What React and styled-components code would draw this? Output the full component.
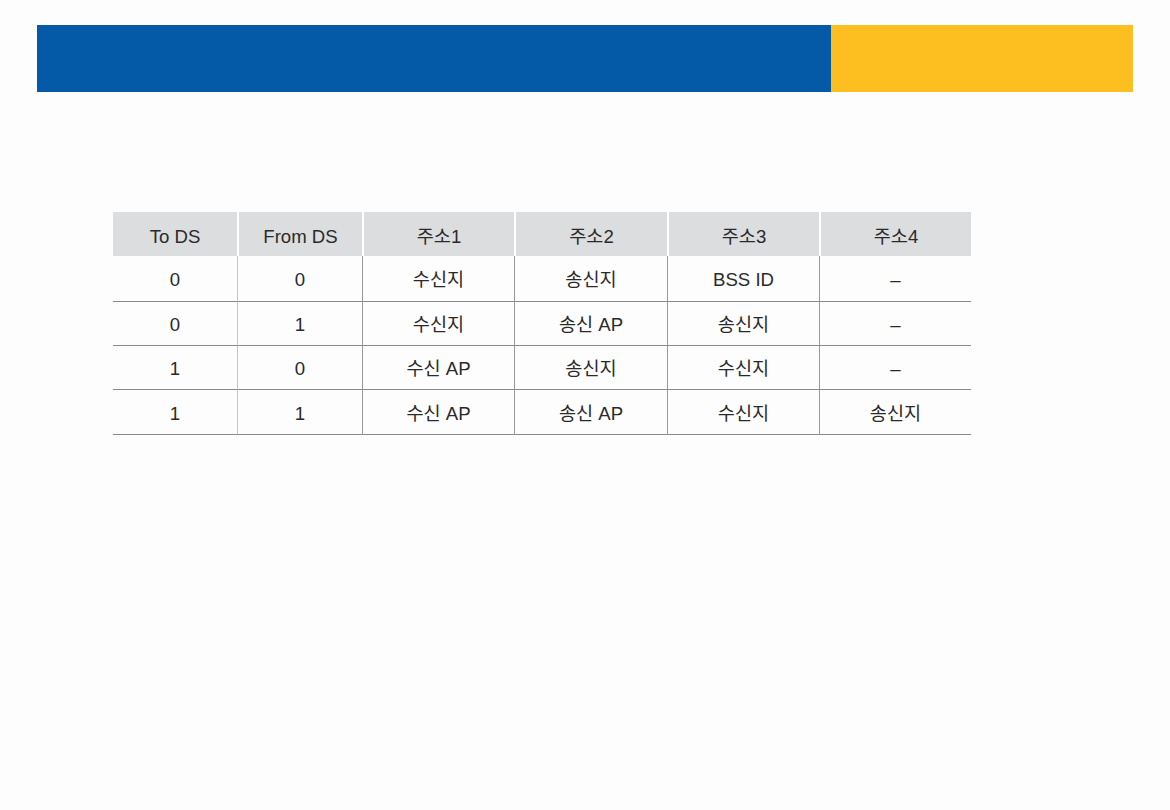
import React from "react";
import styled, { createGlobalStyle } from "styled-components";

const Global = createGlobalStyle`
  html, body { margin: 0; padding: 0; background: #fdfdfd; }
  body { font-family: "Liberation Sans", "Noto Sans CJK KR", sans-serif; }
`;

const Page = styled.div`
  width: 1170px;
  height: 810px;
  padding-top: 25px;
  box-sizing: border-box;
`;

const Banner = styled.div`
  margin-left: 37px;
  width: 1096px;
  height: 67px;
  display: flex;
`;

const BannerPart = styled.div`
  height: 100%;
  background: ${(p) => p.$color};
  width: ${(p) => p.$w}px;
`;

const Grid = styled.div`
  margin: 120px 0 0 113px;
  width: 858px;
  display: grid;
  grid-template-columns: 124px 125px 152px 153px 152px 152px;
  grid-template-rows: 44px 46px 44px 44px 45px;
  color: #2a2a2a;
  font-size: 18.6px;
  line-height: 22px;
`;

const Label = styled.span`
  display: block;
  height: 22px;
  line-height: 22px;
`;

const Head = styled.div`
  background: #dcdddf;
  display: flex;
  align-items: center;
  justify-content: center;
  border-left: ${(p) => (p.$first ? "none" : "2px solid #fff")};
  box-sizing: border-box;
  padding-top: 5px;
`;

const Cell = styled.div`
  display: flex;
  align-items: center;
  justify-content: center;
  border-bottom: 1px solid #8a8a8a;
  border-left: ${(p) => (p.$first ? "none" : `1px solid ${p.$light ? "#c4c4c4" : "#9a9a9a"}`)};
  box-sizing: border-box;
  padding-top: 3px;
`;

const headers = ["To DS", "From DS", "주소1", "주소2", "주소3", "주소4"];
const rows = [
  ["0", "0", "수신지", "송신지", "BSS ID", "–"],
  ["0", "1", "수신지", "송신 AP", "송신지", "–"],
  ["1", "0", "수신 AP", "송신지", "수신지", "–"],
  ["1", "1", "수신 AP", "송신 AP", "수신지", "송신지"],
];

export default function App() {
  return (
    <Page>
      <Global />
      <Banner>
        <BannerPart $color="#045aa6" $w={794} />
        <BannerPart $color="#fdbf20" $w={302} />
      </Banner>
      <Grid>
        {headers.map((h, i) => (
          <Head key={h} $first={i === 0}>
            <Label>{h}</Label>
          </Head>
        ))}
        {rows.map((r, ri) =>
          r.map((c, ci) => (
            <Cell key={ri + "-" + ci} $first={ci === 0} $light={ci === 1}>
              <Label>{c}</Label>
            </Cell>
          ))
        )}
      </Grid>
    </Page>
  );
}
